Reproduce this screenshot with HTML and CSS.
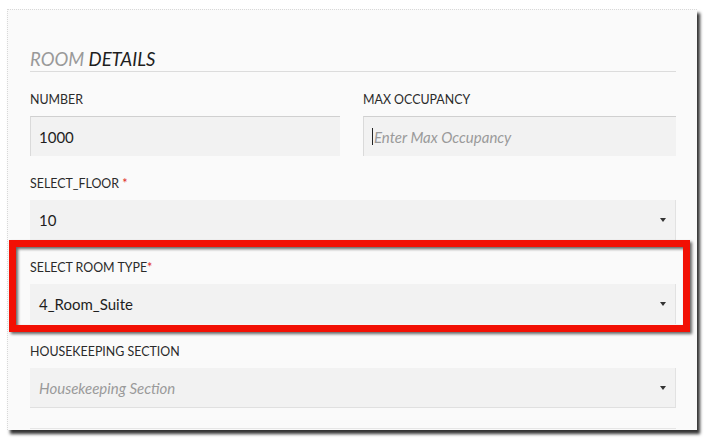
FILE: index.html
```html
<!DOCTYPE html>
<html>
<head>
<meta charset="utf-8">
<link rel="stylesheet" href="styles.css">
</head>
<body>
<div class="panel">
  <h2 class="heading"><span class="light">ROOM</span> DETAILS</h2>
  <div class="row two">
    <div class="field">
      <div class="label">NUMBER</div>
      <div class="input inset"><span class="value">1000</span></div>
    </div>
    <div class="field">
      <div class="label">MAX OCCUPANCY</div>
      <div class="input inset"><span class="caret"></span><span class="placeholder">Enter Max Occupancy</span></div>
    </div>
  </div>
  <div class="field">
    <div class="label">SELECT_FLOOR <span class="req">*</span></div>
    <div class="input select"><span class="value">10</span><span class="arrow"></span></div>
  </div>
  <div class="field">
    <div class="label">SELECT ROOM TYPE<span class="req">*</span></div>
    <div class="input select"><span class="value">4_Room_Suite</span><span class="arrow"></span></div>
  </div>
  <div class="field">
    <div class="label">HOUSEKEEPING SECTION</div>
    <div class="input select bottom"><span class="placeholder">Housekeeping Section</span><span class="arrow"></span></div>
  </div>
  <div class="next"></div>
</div>
<div class="highlight"></div>
</body>
</html>
```

FILE: styles.css
```css
html, body {
  margin: 0;
  padding: 0;
  background: #ffffff;
}
body {
  font-family: Lato, "Liberation Sans", sans-serif;
  color: #333;
  width: 712px;
  height: 444px;
  overflow: hidden;
  position: relative;
}
.panel {
  margin: 9px 0 0 7px;
  width: 690px;
  height: 421px;
  padding: 0 21px 0 22px;
  box-sizing: border-box;
  background: #fafafa;
  border-top: 1px dotted #d8d8d8;
  border-left: 1px dotted #d8d8d8;
  box-shadow: 3px 4px 3px rgba(0,0,0,0.8);
  overflow: hidden;
}
.heading {
  margin: 37px 0 0 0;
  padding: 0;
  font-size: 18.5px;
  line-height: 24px;
  font-style: italic;
  font-weight: 400;
  color: #1e1e1e;
  border-bottom: 1px solid #dcdcdc;
}
.light {
  color: #999;
}
.row.two {
  display: grid;
  grid-template-columns: 310px 313px;
  column-gap: 23px;
  margin-top: 18px;
}
.field {
  margin-top: 18px;
}
.row.two .field {
  margin-top: 0;
}
.label {
  font-size: 12.4px;
  line-height: 19px;
  height: 19px;
  margin-bottom: 7px;
  color: #2a2a2a;
}
.req {
  color: #e0302a;
}
.input {
  height: 40px;
  box-sizing: border-box;
  background: #f2f2f2;
  display: flex;
  align-items: center;
  padding: 0 9px;
  font-size: 15px;
  position: relative;
}
.inset {
  border-top: 1px solid #d0d0d0;
  border-left: 1px solid #dadada;
  padding-left: 8px;
}
.select {
  border-right: 1px solid #e2e2e2;
  justify-content: space-between;
  padding-right: 9px;
}
.select.bottom {
  border-bottom: 1px solid #e0e0e0;
}
.value {
  color: #1e1e1e;
}
.placeholder {
  color: #9a9a9a;
  font-style: italic;
}
.caret {
  width: 1px;
  height: 17px;
  background: #222;
  margin-right: 1px;
}
.arrow {
  width: 0;
  height: 0;
  border-left: 3px solid transparent;
  border-right: 3px solid transparent;
  border-top: 4px solid #333;
}
.next {
  margin-top: 20px;
  height: 10px;
  border-top: 1px solid #e6e6e6;
}
.highlight {
  position: absolute;
  left: 9px;
  top: 240px;
  width: 681px;
  height: 92px;
  box-sizing: border-box;
  border: 7px solid #f21004;
  filter: drop-shadow(2px 2px 1.5px rgba(0,0,0,0.6));
}
```
